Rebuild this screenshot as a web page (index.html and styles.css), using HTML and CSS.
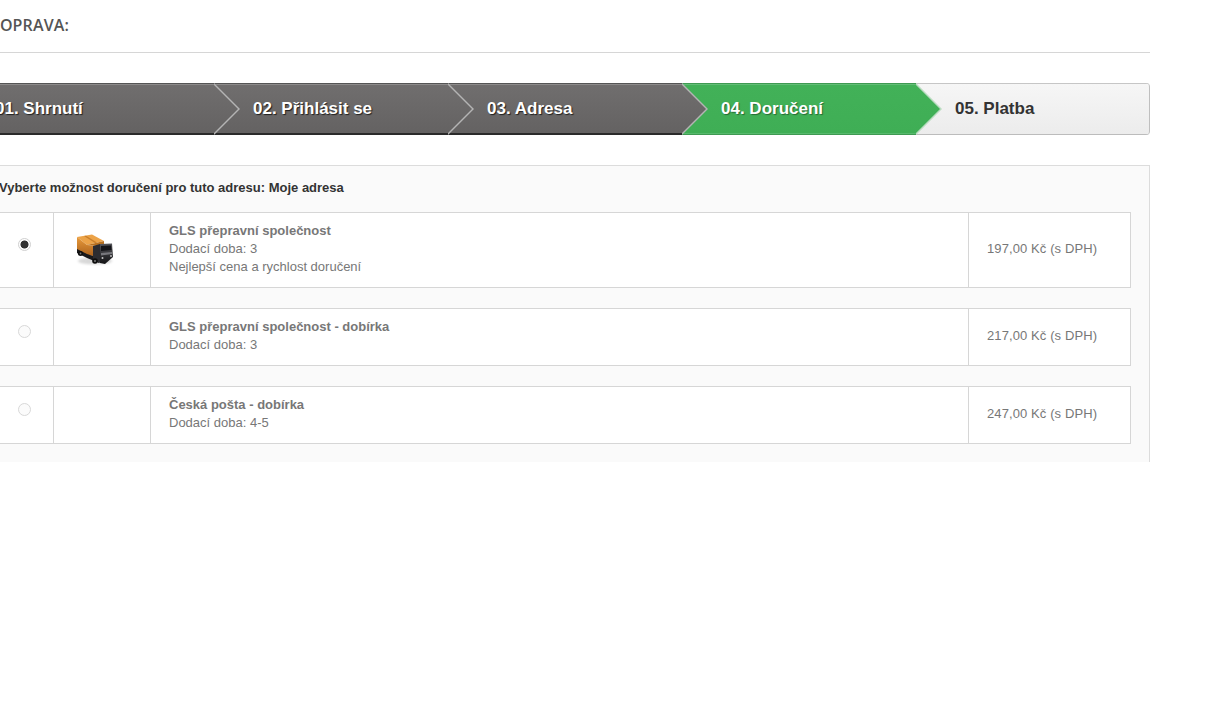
FILE: index.html
```html
<!DOCTYPE html>
<html lang="cs">
<head>
<meta charset="utf-8">
<title>Doprava</title>
<link rel="stylesheet" href="styles.css">
</head>
<body>
<div class="page">
  <h1 class="heading">DOPRAVA:</h1>
  <ul class="steps">
    <li class="step done">01. Shrnutí</li>
    <li class="step done">02. Přihlásit se</li>
    <li class="step done">03. Adresa</li>
    <li class="step current">04. Doručení</li>
    <li class="step todo">05. Platba</li>
  </ul>
  <div class="box">
    <p class="box-title">Vyberte možnost doručení pro tuto adresu: Moje adresa</p>
    <div class="option">
      <div class="cell cell-radio"><span class="radio checked"></span></div>
      <div class="cell cell-logo">
        <svg class="truck" width="40" height="36" viewBox="0 0 40 36" aria-hidden="true">
          <defs>
            <linearGradient id="orange" x1="0" y1="0" x2="0" y2="1"><stop offset="0" stop-color="#e8993a"/><stop offset="1" stop-color="#a9601c"/></linearGradient>
            <linearGradient id="cab" x1="0" y1="0" x2="0" y2="1"><stop offset="0" stop-color="#55555a"/><stop offset="1" stop-color="#121214"/></linearGradient>
            <filter id="soft"><feGaussianBlur stdDeviation="1"/></filter>
          </defs>
          <ellipse cx="20" cy="30" rx="17" ry="3.5" fill="#aaa" opacity=".45" filter="url(#soft)"/>
          <polygon points="2,6 17,3.5 29,10 12,14" fill="#eca348"/>
          <polygon points="9,5 11,4.7 22,11.5 20,12" fill="#c97f2a"/>
          <polygon points="2,6 12,14 24,15 24,26 12,24 2,19" fill="url(#orange)"/>
          <polygon points="12,14 29,10 29,14 24,15" fill="#b8701f"/>
          <polygon points="2,18 12,23 24,27 24,32 12,27 2,22" fill="#19191b"/>
          <polygon points="18,15 25,13 25,32 18,29" fill="#2c2c30"/>
          <polygon points="25,13 37,12.5 38,26 30,33 25,32" fill="url(#cab)"/>
          <polygon points="26,15 36,14.5 36.5,19 26,20" fill="#141418"/>
          <polygon points="26,22 37,21 37,23 26,24.5" fill="#77777c"/>
          <circle cx="27.5" cy="27" r="1" fill="#c8c8c8"/>
          <circle cx="36" cy="25" r=".9" fill="#c8c8c8"/>
          <circle cx="5.5" cy="22.5" r="2.6" fill="#0d0d0d"/>
          <circle cx="20" cy="30" r="2.8" fill="#0d0d0d"/>
          <circle cx="20" cy="30" r="1" fill="#777"/>
          <circle cx="5.5" cy="22.5" r=".9" fill="#777"/>
        </svg>
      </div>
      <div class="cell cell-info">
        <strong class="name">GLS přepravní společnost</strong>
        <span class="line">Dodací doba: 3</span>
        <span class="line">Nejlepší cena a rychlost doručení</span>
      </div>
      <div class="cell cell-price">197,00 Kč (s DPH)</div>
    </div>
    <div class="option">
      <div class="cell cell-radio"><span class="radio"></span></div>
      <div class="cell cell-logo"></div>
      <div class="cell cell-info">
        <strong class="name">GLS přepravní společnost - dobírka</strong>
        <span class="line">Dodací doba: 3</span>
      </div>
      <div class="cell cell-price">217,00 Kč (s DPH)</div>
    </div>
    <div class="option">
      <div class="cell cell-radio"><span class="radio"></span></div>
      <div class="cell cell-logo"></div>
      <div class="cell cell-info">
        <strong class="name">Česká pošta - dobírka</strong>
        <span class="line">Dodací doba: 4-5</span>
      </div>
      <div class="cell cell-price">247,00 Kč (s DPH)</div>
    </div>
  </div>
</div>
</body>
</html>
```
FILE: styles.css
```css
* { box-sizing: border-box; }
html, body { margin: 0; padding: 0; background: #fff; overflow: hidden; }
body { font-family: "Liberation Sans", Arial, sans-serif; font-size: 13px; color: #777; }
.page { width: 1170px; margin-left: -20px; }

.heading {
  margin: 0;
  height: 53px;
  padding: 14px 0 0 8px;
  border-bottom: 1px solid #d6d6d6;
  font-family: "Open Sans", sans-serif;
  font-size: 16px;
  letter-spacing: .15px;
  line-height: 22px;
  font-weight: 600;
  color: #555;
}

.steps { display: flex; list-style: none; margin: 30px 0; padding: 0; }
.step {
  position: relative;
  width: 234px;
  height: 52px;
  padding-left: 39px;
  font-size: 17px;
  font-weight: bold;
  line-height: 52px;
  --bar: linear-gradient(#555 0, #555 1px, #8d8b8b 1px, #8d8b8b 2px, #706e6e 2px, #646262 50px, #2a2a2a 50px, #2a2a2a 52px);
  --edge: #b4b4b4;
  background: var(--bar);
  color: #fff;
  text-shadow: 1px 1px 1px rgba(0,0,0,.7);
}
.step:nth-child(1) { padding-left: 15px; z-index: 5; }
.step:nth-child(2) { z-index: 4; }
.step:nth-child(3) { z-index: 3; }
.step:nth-child(4) { z-index: 2; }
.step::before, .step::after {
  content: "";
  position: absolute;
  top: 0;
  height: 52px;
  width: 26px;
  clip-path: polygon(0 0, 100% 50%, 0 100%);
}
.step::before { left: 100%; background: var(--edge); }
.step::after { left: calc(100% - 2px); background: var(--bar); }
.step.current {
  --bar: linear-gradient(#3f9a52 0, #3f9a52 1px, #63bd77 1px, #63bd77 2px, #42b158 2px, #3fae55 50px, #57b96d 50px, #57b96d 51px, #3f9a52 51px, #3f9a52 52px);
  --edge: #b9dcc0;
  text-shadow: 1px 1px 1px rgba(0,0,0,.4);
}
.step.todo {
  background: linear-gradient(#c6c6c6 0, #c6c6c6 1px, #f6f6f6 1px, #ececec 51px, #bcbcbc 51px, #bcbcbc 52px);
  color: #333;
  text-shadow: none;
  border-right: 1px solid #bfbfbf;
  border-radius: 0 4px 4px 0;
}
.step.todo::before, .step.todo::after { display: none; }

.box {
  height: 297px;
  padding: 13px 18px 18px;
  background: #fafafa;
  border: 1px solid #dcdcdc;
  border-bottom: 0;
}
.box-title {
  margin: 0 0 15px;
  font-size: 13px;
  line-height: 18px;
  font-weight: bold;
  color: #333;
}
.option {
  display: grid;
  grid-template-columns: 54px 97px 818px 1fr;
  margin-bottom: 20px;
  background: #fff;
  border: 1px solid #d6d6d6;
}
.option:last-child { margin-bottom: 0; }
.cell { border-right: 1px solid #d6d6d6; }
.cell:last-child { border-right: 0; }
.cell-radio { display: flex; align-items: center; padding: 0 0 11px 18px; }
.radio {
  display: block;
  width: 13px;
  height: 13px;
  border: 1px solid #d8d8d8;
  border-radius: 50%;
  background: #fbfbfb;
}
.radio.checked { border-color: #d0d0d0; background: radial-gradient(circle, #333 0, #333 3.6px, #fff 4.4px); }
.cell-logo { display: flex; padding: 18px 0 0 21px; }
.truck { display: block; }
.cell-info { padding: 9px 18px 11px; line-height: 18px; }
.name, .line { display: block; }
.name { color: #777; }
.cell-price { display: flex; align-items: center; padding: 0 0 4px 18px; letter-spacing: .1px; }
```
